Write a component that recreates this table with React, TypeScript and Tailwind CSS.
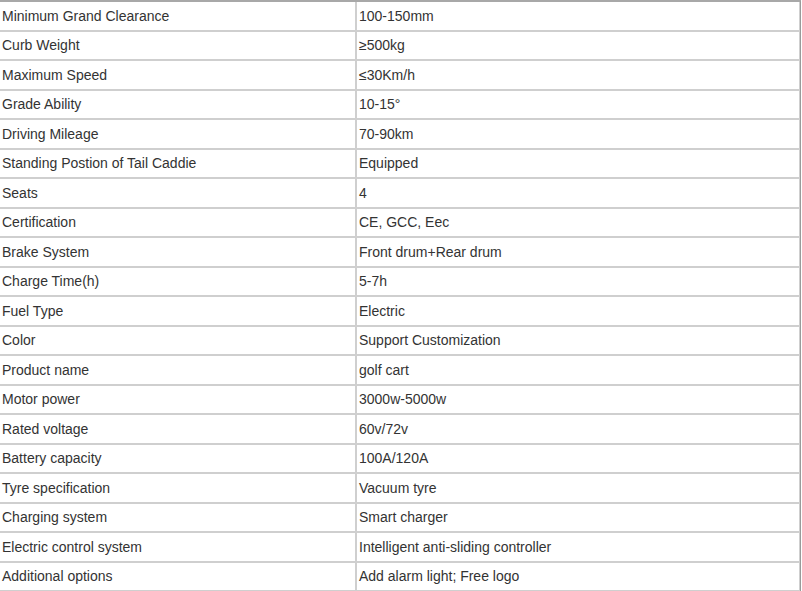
const SPECS: [string, string][] = [
  ['Minimum Grand Clearance', '100-150mm'],
  ['Curb Weight', '≥500kg'],
  ['Maximum Speed', '≤30Km/h'],
  ['Grade Ability', '10-15°'],
  ['Driving Mileage', '70-90km'],
  ['Standing Postion of Tail Caddie', 'Equipped'],
  ['Seats', '4'],
  ['Certification', 'CE, GCC, Eec'],
  ['Brake System', 'Front drum+Rear drum'],
  ['Charge Time(h)', '5-7h'],
  ['Fuel Type', 'Electric'],
  ['Color', 'Support Customization'],
  ['Product name', 'golf cart'],
  ['Motor power', '3000w-5000w'],
  ['Rated voltage', '60v/72v'],
  ['Battery capacity', '100A/120A'],
  ['Tyre specification', 'Vacuum tyre'],
  ['Charging system', 'Smart charger'],
  ['Electric control system', 'Intelligent anti-sliding controller'],
  ['Additional options', 'Add alarm light; Free logo'],
]

export default function App() {
  return (
    <div className="w-[802px] h-[591px] bg-white overflow-hidden" style={{ fontFamily: '"Liberation Sans", Arial, sans-serif' }}>
      <div className="w-[801px] border-t-2 border-t-[#a8a8a8] border-r border-r-[#9a9a9a] text-[14px] text-[#333]">
        {SPECS.map(([label, value]) => (
          <div
            key={label}
            className="grid grid-cols-[357px_1fr] h-[29.5px] border-b-2 border-[#cfcfcf] border-r border-r-[#cfcfcf]"
          >
            <div className="flex items-center pl-[2px] pt-px border-r-2 border-[#cfcfcf]">{label}</div>
            <div className="flex items-center pl-[2px] pt-px">{value}</div>
          </div>
        ))}
      </div>
    </div>
  )
}
